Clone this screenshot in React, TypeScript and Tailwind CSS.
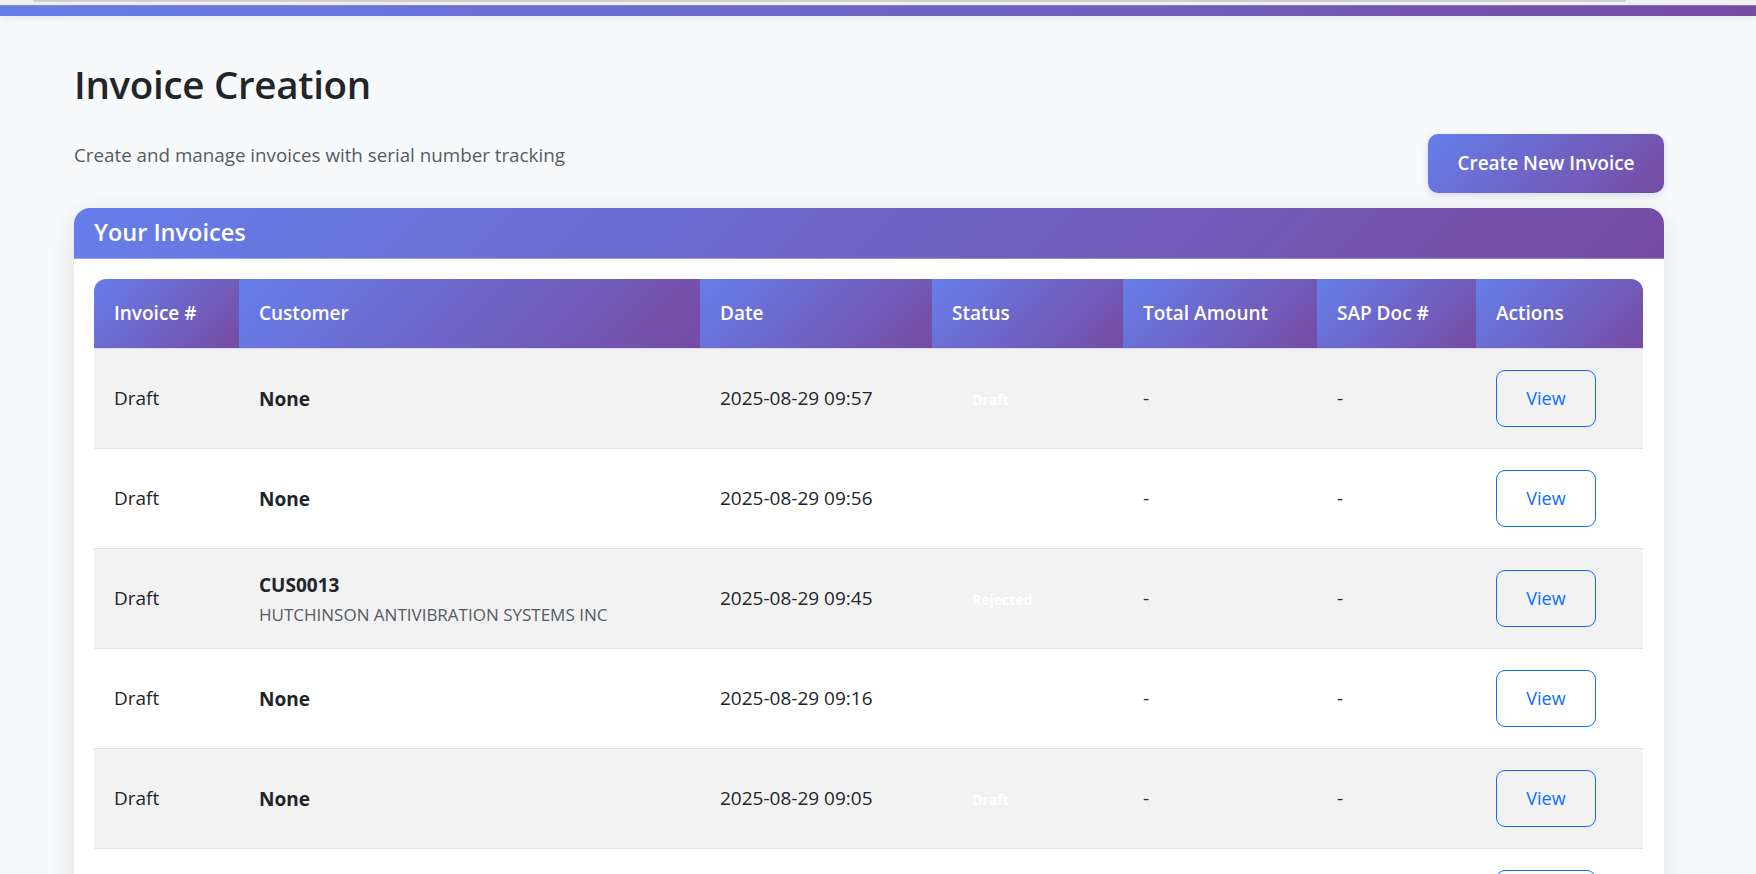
import React from "react";

type Row = {
  inv: string;
  customer: string;
  customerName?: string;
  date: string;
  status: string;
  total: string;
  sap: string;
};

const rows: Row[] = [
  { inv: "Draft", customer: "None", date: "2025-08-29 09:57", status: "Draft", total: "-", sap: "-" },
  { inv: "Draft", customer: "None", date: "2025-08-29 09:56", status: "Draft", total: "-", sap: "-" },
  {
    inv: "Draft",
    customer: "CUS0013",
    customerName: "HUTCHINSON ANTIVIBRATION SYSTEMS INC",
    date: "2025-08-29 09:45",
    status: "Rejected",
    total: "-",
    sap: "-",
  },
  { inv: "Draft", customer: "None", date: "2025-08-29 09:16", status: "Draft", total: "-", sap: "-" },
  { inv: "Draft", customer: "None", date: "2025-08-29 09:05", status: "Draft", total: "-", sap: "-" },
  { inv: "Draft", customer: "None", date: "2025-08-29 08:52", status: "Draft", total: "-", sap: "-" },
];

const thBase =
  "h-[70px] px-5 text-left align-middle font-semibold text-[19px] text-white bg-[linear-gradient(135deg,#667eea_0%,#764ba2_100%)] border-b border-[#dcdcf0]";

export default function App() {
  return (
    <div className="h-screen bg-[#f8f9fa] font-['Open_Sans','Noto_Sans',sans-serif] text-[#212529] overflow-hidden">
      {/* top strip */}
      <div className="h-[5px] bg-[#f3f3f3] flex">
        <div className="ml-[33px] w-[1593px] h-[2px] bg-[#cfcfcf] rounded-b-[2px]" />
      </div>
      <div className="h-[11px] bg-[linear-gradient(90deg,#667eea_0%,#764ba2_100%)] border-t border-[#8d8fe0]/60 shadow-[0_3px_10px_rgba(0,0,0,0.08)]" />

      <main className="pl-[74px] pr-[92px] pt-[44px]">
        <h1 className="text-[38.5px] leading-[48px] font-semibold text-[#212529] tracking-[-0.3px]">
          Invoice Creation
        </h1>

        <div className="mt-[26px] flex items-start justify-between">
          <p className="mt-[7px] text-[18.8px] leading-[28px] text-[#555b61]">
            Create and manage invoices with serial number tracking
          </p>
          <button className="h-[59px] w-[236px] rounded-[10px] bg-[linear-gradient(135deg,#667eea_0%,#764ba2_100%)] text-white font-semibold text-[19px] shadow-[0_2px_6px_rgba(102,126,234,0.25)]">
            Create New Invoice
          </button>
        </div>

        <section className="mt-[15px] rounded-t-[16px] bg-white shadow-[0_6px_28px_rgba(0,0,0,0.10)]">
          <div className="h-[51px] flex items-center px-5 rounded-t-[16px] bg-[linear-gradient(135deg,#667eea_0%,#764ba2_100%)] border-b border-white/30">
            <h2 className="text-[23.5px] font-semibold text-white leading-none">Your Invoices</h2>
          </div>

          <div className="p-5 pr-[21px]">
            <table className="w-full table-fixed border-separate border-spacing-0">
              <thead>
                <tr>
                  <th className={`${thBase} w-[145px] rounded-tl-[12px]`}>Invoice #</th>
                  <th className={`${thBase} w-[461px]`}>Customer</th>
                  <th className={`${thBase} w-[232px]`}>Date</th>
                  <th className={`${thBase} w-[191px]`}>Status</th>
                  <th className={`${thBase} w-[194px]`}>Total Amount</th>
                  <th className={`${thBase} w-[159px]`}>SAP Doc #</th>
                  <th className={`${thBase} rounded-tr-[12px]`}>Actions</th>
                </tr>
              </thead>
              <tbody>
                {rows.map((r, i) => {
                  const bg = i % 2 === 0 ? "bg-[#f2f2f2]" : "bg-white";
                  const td = `${bg} h-[100px] px-5 align-middle border-b border-[#e3e3e3] text-[19px]`;
                  return (
                    <tr key={i}>
                      <td className={td}>{r.inv}</td>
                      <td className={td}>
                        <div className="font-bold leading-[26px]">{r.customer}</div>
                        {r.customerName && (
                          <div className="mt-[6px] text-[17px] leading-[22px] text-[#555b61]">
                            {r.customerName}
                          </div>
                        )}
                      </td>
                      <td className={td}>{r.date}</td>
                      <td className={td}>
                        <span className="inline-block px-5 py-1 rounded-full text-white font-bold text-[14px]">
                          {r.status}
                        </span>
                      </td>
                      <td className={`${td} text-[#1f2d4d]`}>{r.total}</td>
                      <td className={td}>{r.sap}</td>
                      <td className={td}>
                        <button className="h-[57px] w-[100px] rounded-[9px] border border-[#0d6efd] text-[#0d6efd] text-[18px] font-medium">
                          View
                        </button>
                      </td>
                    </tr>
                  );
                })}
              </tbody>
            </table>
          </div>
        </section>
      </main>
    </div>
  );
}
